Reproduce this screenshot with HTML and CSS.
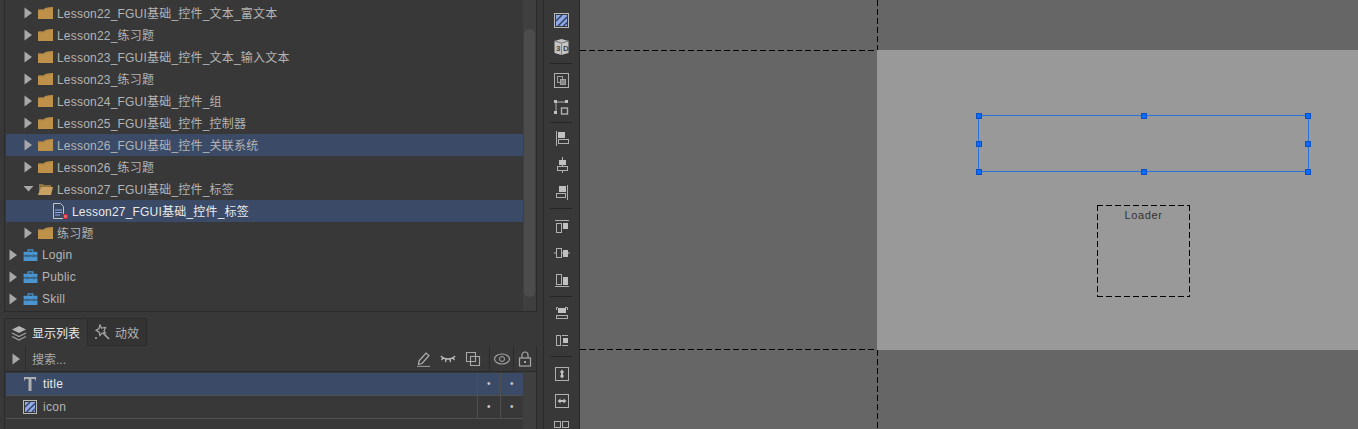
FILE: index.html
```html
<!DOCTYPE html>
<html lang="en">
<head>
    <meta charset="UTF-8">
    <title>FairyGUI Editor</title>
    <link rel="stylesheet" href="styles.css">
</head>
<body>
    <svg class="defs" width="0" height="0">
        <symbol id="arrow" viewBox="0 0 9 12"><path d="M.5 .5l7.500 5.500-7.500 5.500z" fill="#a8a8a8"/></symbol>
        <symbol id="folder" viewBox="0 0 15 12"><path d="M0 2.500h6l1-1.500 7-1h1v12H0z" fill="#bd914a"/><path d="M.5 3h6L8 1.500l6-1" fill="none" stroke="#a67f40" stroke-width=".7"/></symbol>
        <symbol id="case" viewBox="0 0 15 13"><path d="M5 3V1h5v2" fill="none" stroke="#4b96d0" stroke-width="1.400"/><path d="M0 3h15v4H0z" fill="#4b96d0"/><path d="M0 8h15v5H0z" fill="#4b96d0"/><path d="M3 6h2v3H3zM10 6h2v3h-2z" fill="#2c6a99"/></symbol>
        <symbol id="img" viewBox="0 0 14 14"><rect x=".5" y=".5" width="13" height="13" fill="none" stroke="#b8b8b8"/><rect x="2" y="2" width="10" height="10" fill="#8fa8e8"/><path d="M2 7l5-5M3.500 12L12 3.500M9 12l3-3" stroke="#34405c" stroke-width="1.400"/></symbol>
    </svg>

    <div class="app">
        <div class="left">
            <div class="tree-panel">
                <div class="tree">
                    <div class="row l1"><svg class="arrow"><use href="#arrow"/></svg><svg class="folder"><use href="#folder"/></svg><span>Lesson22_FGUI基础_控件_文本_富文本</span></div>
                    <div class="row l1"><svg class="arrow"><use href="#arrow"/></svg><svg class="folder"><use href="#folder"/></svg><span>Lesson22_练习题</span></div>
                    <div class="row l1"><svg class="arrow"><use href="#arrow"/></svg><svg class="folder"><use href="#folder"/></svg><span>Lesson23_FGUI基础_控件_文本_输入文本</span></div>
                    <div class="row l1"><svg class="arrow"><use href="#arrow"/></svg><svg class="folder"><use href="#folder"/></svg><span>Lesson23_练习题</span></div>
                    <div class="row l1"><svg class="arrow"><use href="#arrow"/></svg><svg class="folder"><use href="#folder"/></svg><span>Lesson24_FGUI基础_控件_组</span></div>
                    <div class="row l1"><svg class="arrow"><use href="#arrow"/></svg><svg class="folder"><use href="#folder"/></svg><span>Lesson25_FGUI基础_控件_控制器</span></div>
                    <div class="row l1 sel"><svg class="arrow"><use href="#arrow"/></svg><svg class="folder"><use href="#folder"/></svg><span>Lesson26_FGUI基础_控件_关联系统</span></div>
                    <div class="row l1"><svg class="arrow"><use href="#arrow"/></svg><svg class="folder"><use href="#folder"/></svg><span>Lesson26_练习题</span></div>
                    <div class="row l1">
                        <svg class="arrow" viewBox="0 0 9 12"><path d="M-.5 3h10L4.500 8.500z" fill="#a8a8a8"/></svg>
                        <svg class="folder" viewBox="0 0 15 12"><path d="M1 1h4l1 1h7v2H3L1 11z" fill="#8f7240"/><path d="M3 4h12l-2 8H0z" fill="#c9a263"/></svg>
                        <span>Lesson27_FGUI基础_控件_标签</span>
                    </div>
                    <div class="row l2 sel">
                        <svg class="doc" viewBox="0 0 17 18"><path d="M1.500 1.500h7l3 3v12h-10z" fill="#3a4760" stroke="#c4c4c4"/><path d="M3 8h7M3 10.500h7M3 13h5" stroke="#8fa8e8"/><rect x="11.500" y="12.500" width="4" height="4" fill="#f0606a" stroke="#c02030"/></svg>
                        <span class="bright">Lesson27_FGUI基础_控件_标签</span>
                    </div>
                    <div class="row l1"><svg class="arrow"><use href="#arrow"/></svg><svg class="folder"><use href="#folder"/></svg><span>练习题</span></div>
                    <div class="row l0"><svg class="arrow"><use href="#arrow"/></svg><svg class="folder"><use href="#case"/></svg><span>Login</span></div>
                    <div class="row l0"><svg class="arrow"><use href="#arrow"/></svg><svg class="folder"><use href="#case"/></svg><span>Public</span></div>
                    <div class="row l0"><svg class="arrow"><use href="#arrow"/></svg><svg class="folder"><use href="#case"/></svg><span>Skill</span></div>
                </div>
                <div class="scrollbar"><div class="thumb"></div></div>
            </div>

            <div class="tabs">
                <div class="tab active">
                    <svg class="tab-icon" viewBox="0 0 16 16"><path d="M8 1l7 3.500-7 3.500-7-3.500z" fill="#b4b4b4"/><path d="M1 8l7 3.500L15 8M1 11.500L8 15l7-3.500" fill="none" stroke="#a0a0a0" stroke-width="1.300"/></svg>
                    <span>显示列表</span>
                </div>
                <div class="tab">
                    <svg class="tab-icon" viewBox="0 0 16 16"><path d="M6 1l1.500 3 4-.5-1.500 3.500 1.500 2-3.500 0-2 2.500-1-3.500-3-1.500 3-2z" fill="none" stroke="#a8a8a8" stroke-width="1.200"/><path d="M9 9l6 6" stroke="#a8a8a8" stroke-width="1.600"/><path d="M1 14h2M2 13v2" stroke="#a8a8a8"/></svg>
                    <span>动效</span>
                </div>
            </div>

            <div class="layers">
                <div class="search">
                    <div class="search-arrow"><svg class="arrow"><use href="#arrow"/></svg></div>
                    <div class="search-text">搜索...</div>
                    <div class="search-tools">
                        <svg class="tool" viewBox="0 0 16 16"><path d="M4 10l7-8 3 2.500-7 8-3.500 1z" fill="none" stroke="#b0b0b0" stroke-width="1.200"/><path d="M2 15.500h13" stroke="#909090" stroke-width="1.300"/></svg>
                        <svg class="tool" viewBox="0 0 16 16"><path d="M1 5c3 4 11 4 14 0M3 7L1.500 9M6 8.500L5.500 11M10 8.500l.5 2.500M13 7l1.500 2" fill="none" stroke="#b8b8b8" stroke-width="1.300"/></svg>
                        <svg class="tool" viewBox="0 0 16 16"><path d="M1.500 1.500h9v9h-9z" fill="none" stroke="#a8a8a8" stroke-width="1.100"/><path d="M5.500 5.500h9v9h-9z" fill="none" stroke="#a8a8a8" stroke-width="1.100"/></svg>
                    </div>
                    <div class="search-col"><svg class="tool wide" viewBox="0 0 18 12"><ellipse cx="9" cy="6" rx="7.500" ry="5" fill="none" stroke="#a8a8a8" stroke-width="1.100"/><circle cx="9" cy="6" r="2.500" fill="none" stroke="#a8a8a8"/></svg></div>
                    <div class="search-col narrow"><svg class="tool" viewBox="0 0 14 16"><path d="M4 7V4a3 3 0 0 1 6 0v3" fill="none" stroke="#a8a8a8" stroke-width="1.200"/><rect x="1.500" y="7" width="11" height="8" fill="none" stroke="#a8a8a8" stroke-width="1.200"/><path d="M6 10h2v2H6z" fill="#a8a8a8"/></svg></div>
                </div>
                <div class="list-wrap">
                    <div class="list">
                        <div class="item sel">
                            <svg class="item-icon" viewBox="0 0 14 14"><path d="M1 0h12v3.500h-1V2H8.500v12h-3V2H2v1.500H1z" fill="#b0b0b0"/></svg>
                            <span class="item-name bright">title</span>
                            <div class="dot-col">•</div>
                            <div class="dot-col">•</div>
                        </div>
                        <div class="item">
                            <svg class="item-icon"><use href="#img"/></svg>
                            <span class="item-name">icon</span>
                            <div class="dot-col">•</div>
                            <div class="dot-col">•</div>
                        </div>
                    </div>
                    <div class="list-track"></div>
                </div>
            </div>
        </div>

        <div class="toolbar">
            <svg class="tb" viewBox="0 0 16 16"><rect x=".5" y="1.500" width="14" height="14" fill="none" stroke="#b8b8b8"/><rect x="2" y="3" width="11" height="11" fill="#8fa8e8"/><path d="M2 9l6-6M4 14l9-9M9.500 14l3.500-3.500" stroke="#34405c" stroke-width="1.500"/></svg>
            <svg class="tb" viewBox="0 0 16 16"><path d="M7.500 0l7 2v12l-7 2-7-2V2z" fill="#c4c4c4"/><path d="M.5 2l7 2 7-2" fill="none" stroke="#777"/><path d="M7.500 4v12" stroke="#888"/><text class="cube-text" x="2" y="12">3</text><text class="cube-text" x="9" y="12">D</text></svg>
            <div class="sep"></div>
            <svg class="tb" viewBox="0 0 16 16"><rect x=".5" y="1.500" width="14" height="14" fill="none" stroke="#b0b0b0"/><rect x="3.500" y="4.500" width="5" height="6" fill="none" stroke="#a0a0a0"/><rect x="6.500" y="7.500" width="5" height="5" fill="#888" stroke="#a0a0a0"/></svg>
            <svg class="tb" viewBox="0 0 16 16"><path d="M2 3h10M2 3v10" stroke="#b0b0b0"/><path d="M0 1h3v3H0zM11 1h3v3h-3zM0 12h3v3H0z" fill="#c0c0c0"/><rect x="7.500" y="9" width="6" height="6" fill="none" stroke="#b0b0b0" stroke-width="1.400"/></svg>
            <div class="sep tight"></div>
            <svg class="tb" viewBox="0 0 16 16"><path d="M2.500 1v15" stroke="#b0b0b0"/><path d="M4 2h7v6H4z" fill="#c0c0c0"/><rect x="4.500" y="9.500" width="10" height="4" fill="none" stroke="#b0b0b0"/></svg>
            <svg class="tb" viewBox="0 0 16 16"><path d="M8.500 0v16" stroke="#b0b0b0"/><path d="M5 3h7v5H5z" fill="#c0c0c0"/><rect x="3.500" y="9.500" width="10" height="4" fill="#383838" stroke="#b0b0b0"/></svg>
            <svg class="tb" viewBox="0 0 16 16"><path d="M13.500 1v15" stroke="#b0b0b0"/><path d="M5 2h7v6H5z" fill="#c0c0c0"/><rect x="2.500" y="9.500" width="9" height="4" fill="none" stroke="#b0b0b0"/></svg>
            <div class="sep"></div>
            <svg class="tb" viewBox="0 0 16 16"><path d="M1 3.500h14" stroke="#b0b0b0"/><rect x="2.500" y="6.500" width="5" height="9" fill="none" stroke="#b0b0b0"/><path d="M9 6h5v6H9z" fill="#c0c0c0"/></svg>
            <svg class="tb nudge" viewBox="0 0 16 16"><path d="M0 8h16" stroke="#b0b0b0"/><rect x="2.500" y="3.500" width="5" height="9" fill="#383838" stroke="#b0b0b0"/><path d="M9 5h5v7H9z" fill="#c0c0c0"/></svg>
            <svg class="tb" viewBox="0 0 16 16"><path d="M1 14.500h14" stroke="#b0b0b0"/><rect x="2.500" y="2.500" width="5" height="10" fill="none" stroke="#b0b0b0"/><path d="M9 5h5v8H9z" fill="#c0c0c0"/></svg>
            <div class="sep"></div>
            <svg class="tb" viewBox="0 0 16 16"><path d="M2.500 5V2.500H4M11 2.500h2.500V5" fill="none" stroke="#b0b0b0"/><path d="M4 3h8v5H4z" fill="#c0c0c0"/><rect x="2.500" y="10.500" width="11" height="3" fill="none" stroke="#b0b0b0"/></svg>
            <svg class="tb" viewBox="0 0 16 16"><rect x="2.500" y="3.500" width="4" height="10" fill="none" stroke="#b0b0b0"/><path d="M9 6h5v5H9z" fill="#c0c0c0"/><path d="M8 3.500h6M8 13.500h6" stroke="#b0b0b0"/></svg>
            <div class="sep"></div>
            <svg class="tb" viewBox="0 0 16 16"><rect x="1.500" y="2.500" width="13" height="13" fill="none" stroke="#b0b0b0"/><path d="M8 4.500l2.500 3h-5zM8 13.500l2.500-3h-5z" fill="#c0c0c0"/><path d="M7 6h2v6H7z" fill="#c0c0c0"/></svg>
            <svg class="tb" viewBox="0 0 16 16"><rect x="1.500" y="2.500" width="13" height="13" fill="none" stroke="#b0b0b0"/><path d="M3.500 9l3-2.500v5zM12.500 9l-3-2.500v5z" fill="#c0c0c0"/><path d="M5 8h6v2H5z" fill="#c0c0c0"/></svg>
            <svg class="tb" viewBox="0 0 16 16"><rect x=".5" y="2.500" width="6" height="6" fill="none" stroke="#b0b0b0"/><rect x="8.500" y="2.500" width="6" height="6" fill="none" stroke="#b0b0b0"/><rect x=".5" y="10.500" width="6" height="5" fill="none" stroke="#b0b0b0"/><rect x="8.500" y="10.500" width="6" height="5" fill="none" stroke="#b0b0b0"/></svg>
        </div>

        <div class="canvas">
            <div class="stage"></div>
            <div class="guide h top"></div>
            <div class="guide h bottom"></div>
            <div class="guide v upper"></div>
            <div class="guide v lower"></div>
            <div class="selection">
                <i class="handle tl"></i><i class="handle tc"></i><i class="handle tr"></i>
                <i class="handle ml"></i><i class="handle mr"></i>
                <i class="handle bl"></i><i class="handle bc"></i><i class="handle br"></i>
            </div>
            <div class="loader">Loader</div>
        </div>
    </div>
</body>
</html>
```

FILE: styles.css
```css
html, body {
    margin: 0;
    height: 100%;
    overflow: hidden;
}
body {
    background: #383838;
    color: #b4b4b4;
    font-family: "Liberation Sans", "Noto Sans CJK SC", sans-serif;
    font-size: 12px;
}
.defs {
    position: absolute;
}
.app {
    display: flex;
    height: 429px;
}

/* left side */
.left {
    width: 544px;
    flex: none;
    padding-left: 4px;
    box-sizing: border-box;
    border-right: 1px solid #2b2b2b;
}
.tree-panel {
    display: flex;
    width: 533px;
    height: 312px;
    box-sizing: border-box;
    border: 1px solid #2b2b2b;
    border-top: 0;
    padding: 2px 0 0 1px;
}
.tree {
    flex: 1;
}
.scrollbar {
    width: 13px;
    margin-top: -2px;
    background: #3f3f3f;
    box-sizing: border-box;
    padding: 29px 1px 0;
}
.thumb {
    height: 268px;
    background: #4c4c4c;
    border-radius: 5px;
}
.row {
    display: flex;
    align-items: center;
    height: 22px;
    letter-spacing: 0.2px;
    white-space: nowrap;
}
.row span {
    line-height: 14px;
    margin-top: 1px;
}
.row.sel {
    background: #3a4a67;
}
.l0 { padding-left: 3px; }
.l0 span { margin-top: 0; }
.l1 { padding-left: 18px; }
.l2 { padding-left: 46px; }
.arrow {
    width: 9px;
    height: 12px;
    flex: none;
}
.folder {
    width: 15px;
    height: 12px;
    flex: none;
    margin: 0 4px 0 5px;
}
.doc {
    width: 17px;
    height: 18px;
    margin-right: 3px;
    flex: none;
}
.bright {
    color: #eaeaea;
}

/* tabs */
.tabs {
    display: flex;
    height: 28px;
    margin-top: 6px;
}
.tab {
    display: flex;
    align-items: center;
    gap: 5px;
    padding: 0 6px;
    width: 59px;
    height: 28px;
    box-sizing: border-box;
    background: #333;
    border: 1px solid #2b2b2b;
    border-left: 0;
}
.tab.active {
    width: 84px;
    background: #383838;
    border-left: 1px solid #2b2b2b;
    border-bottom: 0;
    color: #eaeaea;
}
.tab-icon {
    width: 16px;
    height: 16px;
    flex: none;
}

/* display list */
.layers {
    width: 533px;
    height: 84px;
    box-sizing: border-box;
    border: 1px solid #2b2b2b;
    border-top: 0;
}
.search {
    display: flex;
    align-items: center;
    height: 26px;
    border-bottom: 1px solid #2b2b2b;
    box-sizing: border-box;
}
.search-arrow {
    width: 21px;
    height: 25px;
    padding-left: 7px;
    box-sizing: border-box;
    border-right: 1px solid #2b2b2b;
    display: flex;
    align-items: center;
}
.search-text {
    flex: 1;
    padding-left: 6px;
    color: #aaa;
}
.search-tools {
    display: flex;
    gap: 9px;
    padding-right: 8px;
}
.tool {
    width: 16px;
    height: 16px;
    display: block;
}
.tool.wide {
    width: 18px;
}
.search-col {
    height: 25px;
    width: 24px;
    box-sizing: border-box;
    border-left: 1px solid #2b2b2b;
    display: flex;
    align-items: center;
    justify-content: center;
}
.search-col.narrow {
    width: 23px;
}
.list-wrap {
    display: flex;
    height: 57px;
}
.list {
    width: 518px;
    padding: 1px 0 0 1px;
    box-sizing: border-box;
}
.list-track {
    flex: 1;
    background: #3f3f3f;
}
.item {
    display: flex;
    align-items: center;
    height: 23px;
    box-sizing: border-box;
    border-bottom: 1px solid #505050;
    letter-spacing: 0.3px;
}
.item.sel {
    background: #3a4a67;
}
.item-icon {
    width: 14px;
    height: 14px;
    margin-left: 17px;
}
.item-name {
    flex: 1;
    margin-left: 6px;
}
.dot-col {
    width: 23px;
    height: 22px;
    box-sizing: border-box;
    border-left: 1px solid #505050;
    line-height: 22px;
    text-align: center;
    font-size: 10px;
    color: #c8c8c8;
}

/* vertical toolbar */
.toolbar {
    width: 36px;
    flex: none;
    box-sizing: border-box;
    border-right: 1px solid #2b2b2b;
    display: flex;
    flex-direction: column;
    align-items: flex-start;
    padding: 12px 0 0 10px;
    overflow: hidden;
}
.tb {
    width: 16px;
    height: 16px;
    flex: none;
    margin-bottom: 11px;
}
.tb.nudge {
    margin-top: 1px;
}
.cube-text {
    font-size: 8px;
    font-weight: bold;
    fill: #444;
}
.sep {
    width: 22px;
    height: 1px;
    flex: none;
    background: #252525;
    margin: -3px 0 8px -4px;
}
.sep.tight {
    margin: -4px 0 7px -4px;
}

/* stage */
.canvas {
    flex: 1;
    position: relative;
    background: #666;
    overflow: hidden;
}
.stage {
    position: absolute;
    left: 297px;
    top: 50px;
    right: 0;
    height: 300px;
    background: #999;
}
.guide {
    position: absolute;
}
.guide.h {
    left: 0;
    width: 297px;
    height: 1px;
    background: repeating-linear-gradient(90deg, #000 0 6px, transparent 6px 9px);
}
.guide.top { top: 50px; }
.guide.bottom { top: 349px; }
.guide.v {
    left: 297px;
    width: 1px;
    background: repeating-linear-gradient(180deg, #000 0 6px, transparent 6px 9px);
}
.guide.upper { top: 0; height: 50px; }
.guide.lower { top: 350px; height: 79px; }
.selection {
    position: absolute;
    left: 398px;
    top: 115px;
    width: 329px;
    height: 55px;
    border: 1px solid #2a72d8;
}
.handle {
    position: absolute;
    width: 4px;
    height: 4px;
    background: #0a6cff;
    border: 1px solid #0a50c0;
}
.tl, .ml, .bl { left: -3px; }
.tc, .bc { left: 162px; }
.tr, .mr, .br { right: -3px; }
.tl, .tc, .tr { top: -3px; }
.ml, .mr { top: 25px; }
.bl, .bc, .br { bottom: -4px; }
.loader {
    position: absolute;
    left: 517px;
    top: 205px;
    width: 93px;
    height: 92px;
    background:
        repeating-linear-gradient(90deg, #000 0 6px, transparent 6px 9px) top / 100% 1px no-repeat,
        repeating-linear-gradient(90deg, #000 0 6px, transparent 6px 9px) bottom / 100% 1px no-repeat,
        repeating-linear-gradient(180deg, #000 0 6px, transparent 6px 9px) left / 1px 100% no-repeat,
        repeating-linear-gradient(180deg, #000 0 6px, transparent 6px 9px) right / 1px 100% no-repeat;
    text-align: center;
    color: #333;
    font-size: 11px;
    line-height: 20px;
    letter-spacing: 0.6px;
}
```
